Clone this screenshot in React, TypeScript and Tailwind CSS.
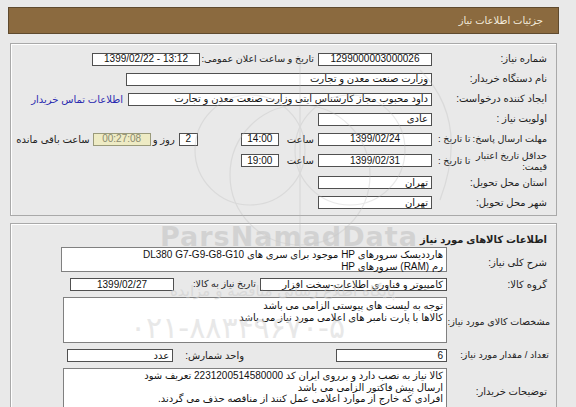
import React from "react";

const font = "font-['Liberation_Sans','DejaVu_Sans',sans-serif]";

function Box({ w, children, center, className = "", ltr }: { w: string; children?: React.ReactNode; center?: boolean; className?: string; ltr?: boolean }) {
  return (
    <div
      dir={ltr ? "ltr" : undefined}
      className={`${w} h-[13px] shrink-0 bg-white border border-[#505050] flex items-center px-[3px] text-[10px] leading-none text-[#111] whitespace-nowrap overflow-hidden ${center ? "justify-center" : ""} ${className}`}
    >
      {children}
    </div>
  );
}

function Row({ h, label, labelW, children }: { h: string; label: React.ReactNode; labelW: string; children?: React.ReactNode }) {
  return (
    <div className={`${h} flex items-center`}>
      <div className={`${labelW} shrink-0 pr-[9px] text-[10px] text-[#222] leading-[12px] whitespace-nowrap`}>{label}</div>
      {children}
    </div>
  );
}

const txt = "text-[10px] text-[#222] whitespace-nowrap";

export default function App() {
  return (
    <div className={`relative w-[576px] h-[407px] overflow-hidden bg-[#e9e9e9] ${font}`}>
      <div dir="rtl" className="ml-[8px] w-[551px] pt-[7px]">
        <div className="h-[27px] bg-[#8b6a3f] border border-[#5f4a2e] flex items-center pr-[15px] text-[10px] text-[#f3ecdc]">
          جزئیات اطلاعات نیاز
        </div>

        <div className="mt-[9px] mx-[2px] border border-[#a9a9a9] shadow-[inset_1px_1px_0_#ffffff] pt-[5px] pb-[3px]">
          <Row h="h-[20px]" labelW="w-[124px]" label="شماره نیاز:">
            <Box w="w-[114px]" center ltr>1299000003000026</Box>
            <span className={`mr-[4px] w-[110px] text-[9.5px] text-[#222] whitespace-nowrap`}>تاریخ و ساعت اعلان عمومی:</span>
            <Box w="w-[108px]" center ltr className="mr-[4px]">1399/02/22 - 13:12</Box>
          </Row>
          <Row h="h-[20px]" labelW="w-[124px]" label="نام دستگاه خریدار:">
            <Box w="w-[306px]">وزارت صنعت معدن و تجارت</Box>
          </Row>
          <Row h="h-[20px]" labelW="w-[124px]" label="ایجاد کننده درخواست:">
            <Box w="w-[304px]">داود محبوب مجاز کارشناس آیتی وزارت صنعت معدن و تجارت</Box>
            <span className="mr-[5px] text-[10px] text-[#2b2bb0] whitespace-nowrap">اطلاعات تماس خریدار</span>
          </Row>
          <Row h="h-[20px]" labelW="w-[124px]" label="اولویت نیاز :">
            <Box w="w-[114px]">عادی</Box>
          </Row>
          <Row
            h="h-[20px]"
            labelW="w-[124px]"
            label={
              <div className="flex items-center justify-between pl-[6px] text-[9.5px]">
                <span>مهلت ارسال پاسخ:</span>
                <span>تا تاریخ :</span>
              </div>
            }
          >
            <Box w="w-[114px]" center ltr>1399/02/24</Box>
            <span className={`mr-[4px] ${txt}`}>ساعت</span>
            <Box w="w-[38px]" center ltr className="mr-[8px]">14:00</Box>
            <Box w="w-[19px]" center className="mr-[43px]">2</Box>
            <span className={`mr-[4px] ${txt}`}>روز و</span>
            <Box w="w-[58px]" center ltr className="mr-[2px] !bg-[#eeebc4] !border-[#9a9a7a] !text-[#8a8a70]">00:27:08</Box>
            <span className={`mr-[3px] ${txt}`}>ساعت باقی مانده</span>
          </Row>
          <Row
            h="h-[23px]"
            labelW="w-[124px]"
            label={
              <div className="flex items-center justify-between pl-[6px] text-[9.5px]">
                <span className="leading-[11px]">
                  حداقل تاریخ اعتبار
                  <br />
                  قیمت:
                </span>
                <span>تا تاریخ :</span>
              </div>
            }
          >
            <Box w="w-[114px]" center ltr>1399/02/31</Box>
            <span className={`mr-[4px] ${txt}`}>ساعت</span>
            <Box w="w-[38px]" center ltr className="mr-[8px]">19:00</Box>
          </Row>
          <Row h="h-[21px]" labelW="w-[124px]" label="استان محل تحویل:">
            <Box w="w-[114px]">تهران</Box>
          </Row>
          <Row h="h-[19px]" labelW="w-[124px]" label="شهر محل تحویل:">
            <Box w="w-[114px]">تهران</Box>
          </Row>
        </div>

        <div className="mt-[7px] mx-[2px] h-[200px] border border-[#a9a9a9] shadow-[inset_1px_1px_0_#ffffff] pt-[7px]">
          <div className="h-[16px] pr-[9px] flex items-center text-[10px] font-bold text-[#222]">اطلاعات کالاهای مورد نیاز</div>
          <div className="flex items-center">
            <div className="w-[109px] shrink-0 pr-[9px] text-[10px] text-[#222] pt-[6px] whitespace-nowrap">شرح کلی نیاز:</div>
            <div className="w-[386px] h-[25px] bg-white border border-[#808080] px-[3px] pt-[1px] text-[10px] leading-[11.5px] text-[#111]">
              هارددیسک سرورهای HP موجود برای سری های DL380 G7-G9-G8-G10
              <br />
              رم (RAM) سرورهای HP
            </div>
          </div>
          <div className="h-[25px] flex items-center">
            <div className="w-[109px] shrink-0 pr-[9px] text-[10px] text-[#222] whitespace-nowrap">گروه کالا:</div>
            <Box w="w-[187px]">کامپیوتر و فناوری اطلاعات-سخت افزار</Box>
            <span className="mr-[4px] w-[76px] text-[9.5px] text-[#222] whitespace-nowrap">تاریخ نیاز به کالا:</span>
            <Box w="w-[104px]" center ltr className="mr-[6px]">1399/02/27</Box>
          </div>
          <div className="flex items-center">
            <div className="w-[109px] shrink-0 pr-[6px] text-[9.5px] tracking-[-0.2px] text-[#222] pt-[4px] whitespace-nowrap">مشخصات کالای مورد نیاز:</div>
            <div className="w-[384px] h-[46px] bg-white border border-[#808080] px-[3px] pt-[2px] text-[10px] leading-[12px] text-[#111]">
              توجه به لیست های پیوستی الزامی می باشد
              <br />
              کالاها با پارت نامبر های اعلامی مورد نیاز می باشد
            </div>
          </div>
          <div className="h-[25px] flex items-center">
            <div className="w-[109px] shrink-0 pr-[7px] text-[9.5px] text-[#222] whitespace-nowrap">تعداد / مقدار مورد نیاز:</div>
            <Box w="w-[111px]">6</Box>
            <span className={`mr-[92px] ${txt}`}>واحد شمارش:</span>
            <Box w="w-[106px]" className="mr-[12px]">عدد</Box>
          </div>
          <div className="flex items-start">
            <div className="w-[109px] shrink-0 pr-[9px] text-[10px] text-[#222] pt-[16px] whitespace-nowrap">توضیحات خریدار:</div>
            <div className="w-[384px] h-[46px] bg-white border border-[#808080] px-[3px] pt-[1px] text-[10px] leading-[11.5px] text-[#111]">
              کالا نیاز به نصب دارد و برروی ایران کد 2231200514580000 تعریف شود
              <br />
              ارسال پیش فاکتور الزامی می باشد
              <br />
              افرادی که خارج از موارد اعلامی عمل کنند از مناقصه حذف می گردند.
            </div>
          </div>
        </div>
      </div>

      <div className="pointer-events-none absolute inset-0">
        <svg width="576" height="407" className="absolute inset-0 opacity-30">
          <g fill="none" stroke="#b8b8b8" strokeWidth="1.2">
            <circle cx="300" cy="175" r="70" />
            <circle cx="250" cy="150" r="55" />
            <circle cx="350" cy="150" r="55" />
            <path d="M300 60 L300 260" />
            <path d="M420 70 Q470 120 440 200" />
          </g>
        </svg>
        <div className="absolute left-[160px] top-[217px] text-[27px] font-bold tracking-[1px] text-[#c9c9c9] opacity-70 font-['DejaVu_Sans',sans-serif]">
          ParsNamadData
        </div>
        <div dir="rtl" className="absolute left-[170px] top-[280px] text-[15px] text-[#cfcfcf] opacity-60 font-['DejaVu_Sans',sans-serif]">
          پایگاه اطلاع رسانی مناقصه و مزایده
        </div>
        <div dir="ltr" className="absolute left-[130px] top-[305px] text-[30px] text-[#d2d2d2] opacity-50 font-['DejaVu_Sans',sans-serif]">
          ۰۲۱-۸۸۳۴۹۶۷۰-۵
        </div>
      </div>
    </div>
  );
}
